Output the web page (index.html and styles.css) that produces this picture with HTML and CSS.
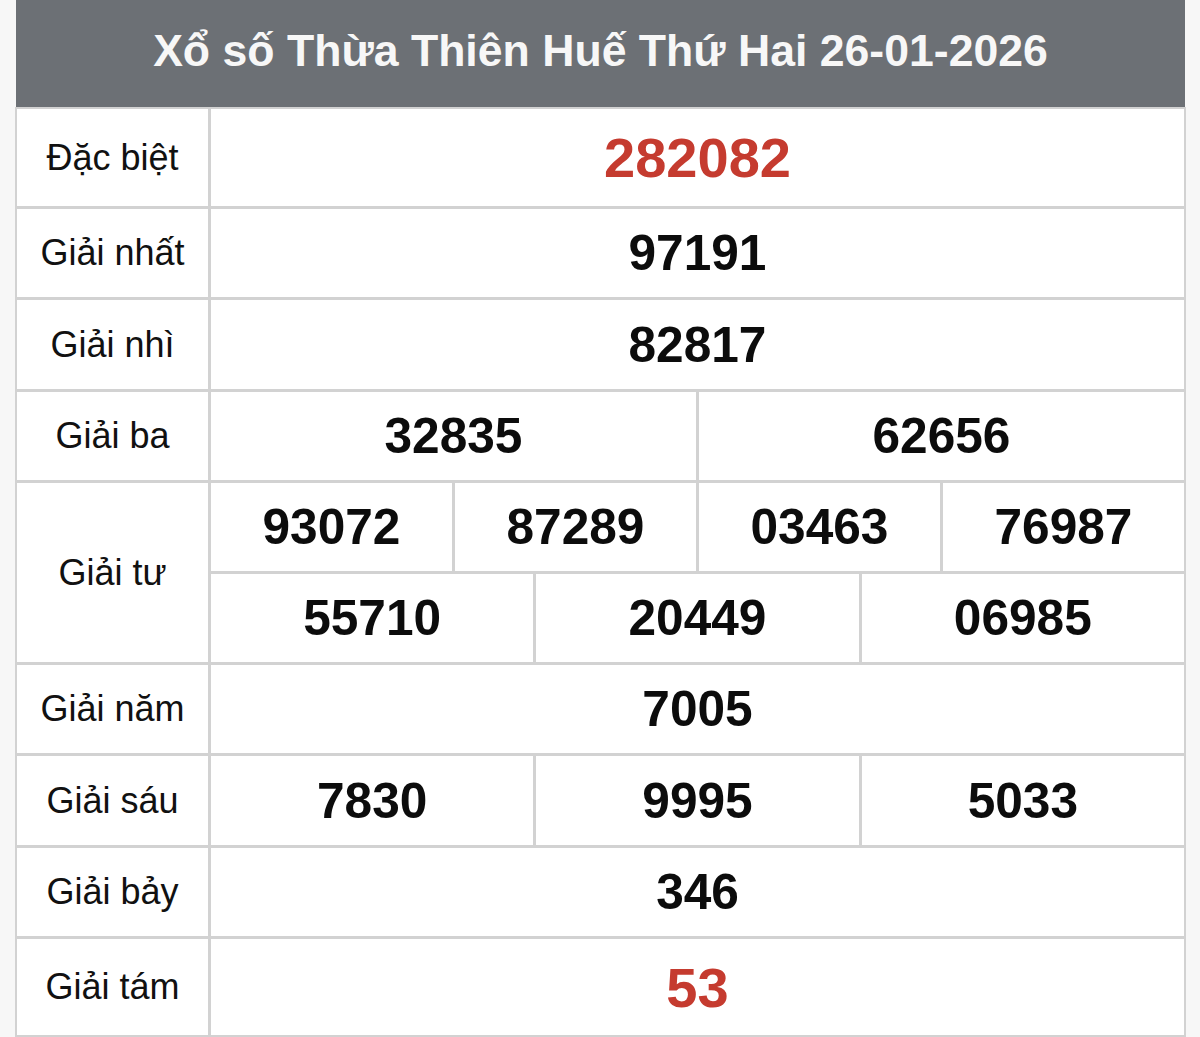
FILE: index.html
```html
<!DOCTYPE html>
<html lang="vi">
<head>
<meta charset="utf-8">
<title>Xổ số Thừa Thiên Huế</title>
<link rel="stylesheet" href="styles.css">
</head>
<body>
<div class="board">
  <div class="title">Xổ số Thừa Thiên Huế Thứ Hai 26-01-2026</div>
  <div class="grid">
    <div class="label r-special">Đặc biệt</div>
    <div class="num red big span12">282082</div>

    <div class="label">Giải nhất</div>
    <div class="num span12">97191</div>

    <div class="label">Giải nhì</div>
    <div class="num span12">82817</div>

    <div class="label">Giải ba</div>
    <div class="num span6">32835</div>
    <div class="num span6">62656</div>

    <div class="label tall">Giải tư</div>
    <div class="num span3">93072</div>
    <div class="num span3">87289</div>
    <div class="num span3">03463</div>
    <div class="num span3">76987</div>
    <div class="num span4">55710</div>
    <div class="num span4">20449</div>
    <div class="num span4">06985</div>

    <div class="label">Giải năm</div>
    <div class="num span12">7005</div>

    <div class="label">Giải sáu</div>
    <div class="num span4">7830</div>
    <div class="num span4">9995</div>
    <div class="num span4">5033</div>

    <div class="label">Giải bảy</div>
    <div class="num span12">346</div>

    <div class="label">Giải tám</div>
    <div class="num red big span12">53</div>
  </div>
</div>
</body>
</html>
```
FILE: styles.css
```css
html, body {
  margin: 0;
  padding: 0;
  background: #f7f7f7;
}
body {
  font-family: "Liberation Sans", Arial, sans-serif;
  color: #111;
}
.board {
  margin-left: 15px;
  width: 1171px;
}
.title {
  height: 107px;
  background: #6c7075;
  color: #f7f7f7;
  font-weight: bold;
  font-size: 44.6px;
  display: flex;
  align-items: center;
  justify-content: center;
  padding-bottom: 6px;
  box-sizing: border-box;
  margin-left: 1px;
  margin-right: 1px;
}
.grid {
  display: grid;
  grid-template-columns: 191px repeat(12, 1fr);
  grid-template-rows: 97px 88px 89px 88px 88px 88px 88px 89px 88px 96px;
  gap: 3px;
  padding: 2px;
  background: #d2d2d2;
}
.label, .num {
  background: #fff;
  display: flex;
  align-items: center;
  justify-content: center;
}
.label {
  font-size: 36px;
  grid-column: 1;
}
.tall {
  grid-row: span 2;
}
.num {
  font-weight: bold;
  font-size: 49.6px;
  color: #0c0c0c;
}
.big {
  font-size: 56px;
}
.red {
  color: #c53b2f;
}
.span12 { grid-column: span 12; }
.span6 { grid-column: span 6; }
.span4 { grid-column: span 4; }
.span3 { grid-column: span 3; }
```
